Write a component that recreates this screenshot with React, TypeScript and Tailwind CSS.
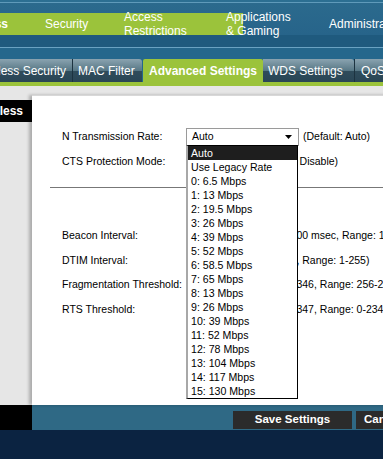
import React from "react";

const rates = [
  "Auto",
  "Use Legacy Rate",
  "0: 6.5 Mbps",
  "1: 13 Mbps",
  "2: 19.5 Mbps",
  "3: 26 Mbps",
  "4: 39 Mbps",
  "5: 52 Mbps",
  "6: 58.5 Mbps",
  "7: 65 Mbps",
  "8: 13 Mbps",
  "9: 26 Mbps",
  "10: 39 Mbps",
  "11: 52 Mbps",
  "12: 78 Mbps",
  "13: 104 Mbps",
  "14: 117 Mbps",
  "15: 130 Mbps",
];

function Row({ label, text, w }: { label: string; text: string; w: number }) {
  return (
    <div className="flex items-center h-[18px] mt-[6.7px] pl-[30px]">
      <div className="w-[124px] shrink-0 whitespace-nowrap">{label}</div>
      <div className="h-[16px] border border-[#9a9a9a] bg-white shrink-0" style={{ width: w }} />
      <div className="ml-[5px] whitespace-nowrap">{text}</div>
    </div>
  );
}

export default function App() {
  return (
    <div className="w-[383px] h-[459px] overflow-hidden bg-white font-['Liberation_Sans',Arial,sans-serif]">
      {/* Header */}
      <div className="h-[59px] bg-[linear-gradient(to_bottom,#2c6f92_0px,#2c6f92_2px,#5f9aba_2px,#5f9aba_3px,#2b6a8d_3px,#27648a_35px,#1f5a7e_35px,#1f5a7e_47px,#6aa2c2_47px,#6aa2c2_48px,#25678c_48px,#25678c_59px)] pt-[13px]">
        <div className="h-[22px] flex items-center text-[12px] text-white bg-[linear-gradient(to_right,#9bc33b,#9bc33b)] bg-no-repeat bg-[length:243px_100%] leading-[14px]">
          <div className="w-[45px] shrink-0 flex justify-end pr-[37px] font-bold whitespace-nowrap">Wireless</div>
          <div className="w-[79px] shrink-0 whitespace-nowrap">Security</div>
          <div className="w-[102px] shrink-0 whitespace-nowrap">Access<br />Restrictions</div>
          <div className="w-[103px] shrink-0 whitespace-nowrap">Applications<br />&amp; Gaming</div>
          <div className="shrink-0 whitespace-nowrap">Administration</div>
        </div>
      </div>
      {/* Tabs */}
      <div className="h-[27px] bg-[#25678c] flex items-start text-[12px] text-white">
        <div className="h-[23px] w-[72px] shrink-0 flex items-center justify-end pr-[6px] bg-[linear-gradient(to_bottom,#8aa3b0,#587886_50%,#2f4c5b_52%,#2a4656)] whitespace-nowrap">Wireless Security</div>
        <div className="h-[23px] w-px bg-[#1c3340] shrink-0" />
        <div className="h-[23px] w-[69px] shrink-0 flex items-center pl-[5px] bg-[linear-gradient(to_bottom,#8aa3b0,#587886_50%,#2f4c5b_52%,#2a4656)] rounded-tr-[3px] whitespace-nowrap">MAC Filter</div>
        <div className="h-[27px] w-[120px] ml-[1px] shrink-0 flex items-center justify-center pb-[4px] bg-[#9bc33b] font-bold rounded-t-[2px] whitespace-nowrap">Advanced Settings</div>
        <div className="h-[23px] w-[91px] shrink-0 flex items-center pl-[5px] bg-[linear-gradient(to_bottom,#8aa3b0,#587886_50%,#2f4c5b_52%,#2a4656)] rounded-tr-[3px] whitespace-nowrap">WDS Settings</div>
        <div className="h-[23px] w-px bg-[#1c3340] shrink-0" />
        <div className="h-[23px] flex-1 flex items-center pl-[6px] bg-[linear-gradient(to_bottom,#8aa3b0,#587886_50%,#2f4c5b_52%,#2a4656)] whitespace-nowrap">QoS</div>
      </div>
      <div className="h-[4px] bg-[#9bc33b] -mt-[4px] relative" />
      {/* Main */}
      <div className="h-[319px] flex bg-[#e6e6e6]">
        <div className="w-[32px] shrink-0 pt-[14px] overflow-hidden">
          <div className="h-[22px] bg-black text-white font-bold text-[12px] flex items-center justify-end pr-[9px] whitespace-nowrap">Wireless</div>
        </div>
        <div className="flex-1 pt-[9px] flex flex-col">
          <div className="flex-1 bg-white relative text-[10.5px] text-black shadow-[-3px_0_3px_rgba(0,0,0,0.25)] border-t border-[#d8d8d8]">
            <div className="flex items-center h-[18px] mt-[32px] pl-[30px]">
              <div className="w-[124px] shrink-0 whitespace-nowrap">N Transmission Rate:</div>
              <div className="h-[18px] w-[113px] border border-[#9a9a9a] bg-white shrink-0 flex items-center justify-between pl-[5px] pr-[6px]">
                <span>Auto</span>
                <svg width="7" height="4" viewBox="0 0 7 4"><path d="M0 0h7L3.5 4z" fill="#000" /></svg>
              </div>
              <div className="ml-[4px] whitespace-nowrap">(Default: Auto)</div>
            </div>
            <Row label="CTS Protection Mode:" text="(Default: Disable)" w={66} />
            <div className="ml-[18px] mt-[16px] h-px bg-[#777]" />
            <div className="mt-[39px]" />
            <Row label="Beacon Interval:" text="(Default: 100 msec, Range: 1-65535)" w={57} />
            <Row label="DTIM Interval:" text="(Default: 1, Range: 1-255)" w={57} />
            <Row label="Fragmentation Threshold:" text="(Default: 2346, Range: 256-2346)" w={57} />
            <Row label="RTS Threshold:" text="(Default: 2347, Range: 0-2347)" w={57} />
            {/* Dropdown list */}
            <div className="absolute left-[154px] top-[49px] w-[112px] bg-white border border-black border-l-[2px] border-l-[#a8a8a8] text-[10.6px]">
              {rates.map((r, i) => (
                <div
                  key={r}
                  className={
                    i === 0
                      ? "h-[14px] leading-[14px] pl-[3px] bg-[#1e1e1e] text-white whitespace-nowrap"
                      : "h-[14px] leading-[14px] pl-[3px] whitespace-nowrap"
                  }
                >
                  {r}
                </div>
              ))}
            </div>
          </div>
        </div>
      </div>
      {/* Footer */}
      <div className="h-[25px] flex">
        <div className="w-[32px] bg-black shrink-0" />
        <div className="flex-1 bg-[#2f6985] flex items-start pt-[6px] pl-[201px] gap-[4px]">
          <div className="h-[18px] w-[119px] shrink-0 bg-[#2b2b2b] text-white font-bold text-[11.5px] flex items-center justify-center whitespace-nowrap">Save Settings</div>
          <div className="h-[18px] w-[119px] shrink-0 bg-[#2b2b2b] text-white font-bold text-[11.5px] flex items-center pl-[8px] whitespace-nowrap">Cancel Changes</div>
        </div>
      </div>
      <div className="h-[29px] bg-[#0b2341]" />
    </div>
  );
}
